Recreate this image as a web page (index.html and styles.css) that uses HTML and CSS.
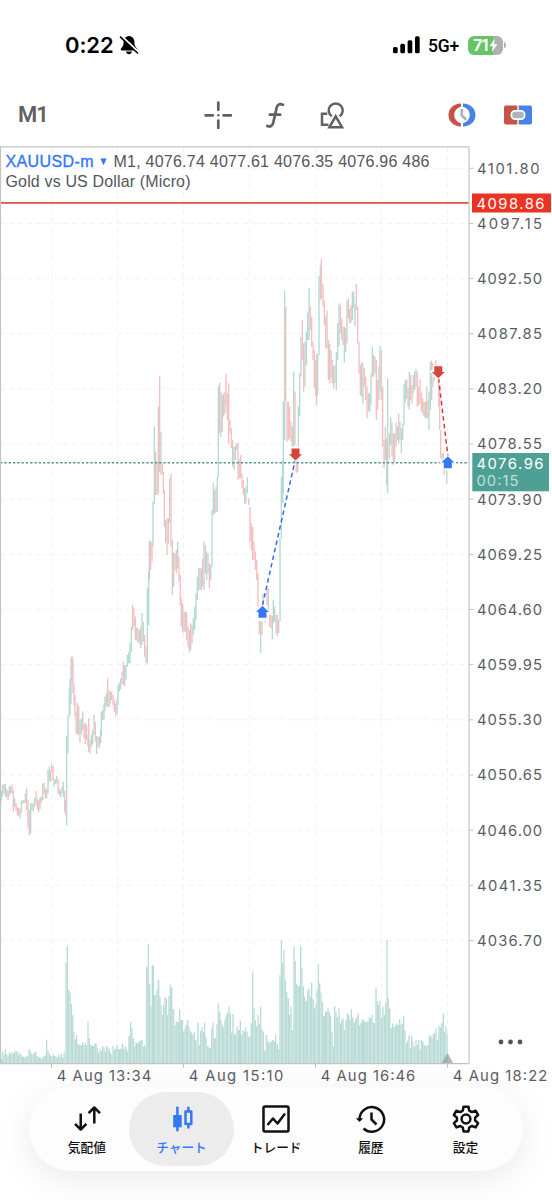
FILE: index.html
```html
<!DOCTYPE html>
<html lang="ja">
<head>
<meta charset="utf-8">
<title>XAUUSD-m</title>
<link rel="stylesheet" href="styles.css">
</head>
<body>
<div class="screen">
  <header class="status">
    <div class="status-left">
      <span class="clock">0:22</span>
      <svg class="bell" width="20" height="20" viewBox="0 0 20 20">
        <path d="M10 1C6.300 1.300 4.600 4 4.600 7.200C4.600 10.500 3.500 12 2.200 13.300C1.300 14.300 1.600 15.400 3 15.400H17C18.400 15.400 18.700 14.300 17.800 13.300C16.500 12 15.400 10.500 15.400 7.200C15.400 4 13.700 1.300 10 1Z"/>
        <path d="M7 16.600H13C12.700 20 7.300 20 7 16.600Z"/>
        <path d="M1.800 0.800L20.300 18" stroke="#fff" stroke-width="2.600"/>
        <path d="M1 1.600L19 18.500" stroke="#000" stroke-width="1.500"/>
      </svg>
    </div>
    <div class="status-right">
      <svg width="28" height="18" viewBox="0 0 28 18">
        <rect x="0" y="11" width="4.700" height="6.300" rx="1.600"/><rect x="7.300" y="7.800" width="4.700" height="9.500" rx="1.600"/>
        <rect x="14.600" y="4.300" width="4.700" height="13" rx="1.600"/><rect x="22" y="0.300" width="4.700" height="17" rx="1.600"/>
      </svg>
      <span class="network">5G+</span>
      <div class="battery"><span>71</span><svg width="9" height="13" viewBox="0 0 9 13"><path d="M5.600 0L0.500 7.300H3.700L2.700 13L8.500 5.200H5.100Z" fill="#fff"/></svg></div>
      <i class="battery-cap"></i>
    </div>
  </header>

  <nav class="toolbar">
    <span class="timeframe">M1</span>
    <div class="tools">
      <svg width="28" height="28" viewBox="0 0 28 28" class="line"><path d="M14.300 1.500V8.800M14.300 19.500V27M1.500 14.300H8.800M19.500 14.300H27"/><circle cx="14.300" cy="14.300" r="1.200" fill="#606060" stroke="none"/></svg>
      <svg width="22" height="28" viewBox="0 0 22 28" class="line"><path d="M19 3.700C15.700 2.600 13.500 3.100 12.700 6.500L9.300 21.500C8.500 25 6.300 26.200 3.300 25M5.800 13.700H16.200"/></svg>
      <svg width="28" height="28" viewBox="0 0 28 28" class="line shapes"><path d="M9.300 12.800H4V23.700H10.500M13.800 15.200A7 7 0 1 1 21.600 15.200M17.700 15.300L24 26.200H11.400Z"/></svg>
    </div>
    <div class="trade-tools">
      <svg width="28" height="24" viewBox="0 0 28 24">
        <path d="M13 0.500C5.500 0.700 0.500 5.500 0.500 12S5.500 23.300 13 23.500V20.200C9 19 6.300 16.200 6.300 12S9 5 13 3.800Z" fill="#c65446"/>
        <path d="M15 0.500C22.500 0.700 27.500 5.500 27.500 12S22.500 23.300 15 23.500V20.200C19 19 21.700 16.200 21.700 12S19 5 15 3.800Z" fill="#4982e6"/>
        <path d="M13.800 6V12.500L18.200 16.800" fill="none" stroke="#adb1b4" stroke-width="2.600"/>
      </svg>
      <svg width="28" height="20" viewBox="0 0 28 20">
        <path d="M2 0.500H13.300V19.500H2Q0 19.500 0 17.500V2.500Q0 0.500 2 0.500Z" fill="#c65446"/>
        <path d="M14.700 0.500H26Q28 0.500 28 2.500V17.500Q28 19.500 26 19.500H14.700Z" fill="#4982e6"/>
        <rect x="7.400" y="5.900" width="13.200" height="8.200" rx="3.500" fill="#adb5b8" stroke="#fff" stroke-width="1.700"/>
      </svg>
    </div>
  </nav>

  <main class="chart-wrap">
    <svg class="chart" id="chart" width="552" height="941" viewBox="0 146 552 941">
      <g id="grid" class="grid"></g>
      <g id="volume" class="volume"></g>
      <g id="candles"></g>
      <path d="M0 462.700H469" class="bid"/>
      <path d="M0 202.900H469" class="ask"/>
      <path d="M262.500 605L295 461" class="trade blue"/>
      <path d="M438.500 378L448 457" class="trade red"/>
      <g id="markers"></g>
      <path d="M441.500 1063.500L447.500 1053L453.500 1063.500Z" fill="#8a9693" opacity=".65"/>
      <path d="M0 146.900H469V1063.600H0M0.500 147V1063" class="frame"/>
      <g id="axis" class="axis"></g>
      <rect x="472" y="193.500" width="79" height="19" fill="#eb3323"/>
      <text x="476.500" y="208.500" textLength="68" class="tag">4098.86</text>
      <rect x="472.300" y="453" width="76.700" height="38.300" fill="#4e9f94"/>
      <text x="476.500" y="468.500" textLength="67" class="tag">4076.96</text>
      <text x="476.500" y="486" textLength="42" class="tag dim">00:15</text>
      <g class="caption">
        <text x="5.500" y="166.600" textLength="88" class="symbol">XAUUSD-m</text>
        <path d="M100.300 158.600H106.700L103.500 165.300Z" fill="#3478f6"/>
        <text x="113.500" y="166.600" textLength="316">M1, 4076.74 4077.61 4076.35 4076.96 486</text>
        <text x="5.500" y="186.600" textLength="185">Gold vs US Dollar (Micro)</text>
      </g>
      <g fill="#505359"><circle cx="501" cy="1042" r="2.400"/><circle cx="510.500" cy="1042" r="2.400"/><circle cx="520" cy="1042" r="2.400"/></g>
    </svg>
  </main>

  <footer class="tabs">
    <div class="tab"><svg width="32" height="30" viewBox="0 0 32 30"><path d="M9.700 8.500V24.500M4 18.800L9.700 24.500L15.400 18.800M23.300 18.500V2.500M17.600 8.200L23.300 2.500L29 8.200"/></svg><span>気配値</span></div>
    <div class="tab active"><svg width="32" height="30" viewBox="0 0 32 30"><path d="M11.400 1.700V26.300" /><rect x="7.200" y="10" width="8.500" height="12.300" fill="currentColor" stroke="none"/><path d="M22.400 1.700V6.500M22.400 19V23.500"/><rect x="19.500" y="6.500" width="5.800" height="12.500"/></svg><span>チャート</span></div>
    <div class="tab"><svg width="32" height="30" viewBox="0 0 32 30"><rect x="3.500" y="1.500" width="25" height="25" rx="1.500"/><path d="M7.500 20L13 13.500L17.500 18.500L25 8.500"/></svg><span>トレード</span></div>
    <div class="tab"><svg width="32" height="30" viewBox="0 0 32 30"><path d="M4.500 14.500A12.300 12.300 0 1 1 8.500 23.500M16.500 7.500V14.500L21.500 19.500"/><path d="M0.800 13.300H8.200L4.500 17Z" fill="currentColor" stroke="none"/></svg><span>履歴</span></div>
    <div class="tab"><svg width="32" height="30" viewBox="0 0 32 30"><path stroke-linejoin="round" d="M13.500 1.700H18.500L19.200 5.600L21.800 7.100L25.600 5.700L28.100 10L25.100 12.600V15.500L28.100 18.100L25.600 22.400L21.800 21L19.200 22.500L18.500 26.400H13.500L12.800 22.500L10.200 21L6.400 22.400L3.900 18.100L6.900 15.500V12.600L3.900 10L6.400 5.700L10.200 7.100L12.800 5.600Z"/><circle cx="16" cy="14" r="4.400"/></svg><span>設定</span></div>
  </footer>
</div>
<script src="chart.js"></script>
</body>
</html>
```
FILE: styles.css
```css
* { box-sizing: border-box; }
body { margin: 0; background: #fff; font-family: Inter, "Noto Sans CJK JP", sans-serif; }
.screen { width: 552px; height: 1200px; overflow: hidden; display: flex; flex-direction: column; background: #fff; }
.status { height: 90px; display: flex; justify-content: space-between; padding: 32px 47px 0 65px; }
.status-left, .status-right { display: flex; align-items: center; height: 26px; }
.clock { font: 600 22px/26px Inter, sans-serif; width: 49px; letter-spacing: -0.1px; }
.bell { margin-left: 5px; }
.network { font: 500 17.500px/20px Roboto, sans-serif; width: 33px; margin: 1px 7px 0 7px; letter-spacing: -0.2px; white-space: nowrap; }
.battery { width: 35px; height: 19px; border-radius: 6px; display: flex; align-items: center; justify-content: center; gap: 1px; background: linear-gradient(90deg, #65c466 71%, #afb1af 71%); }
.battery span { color: #fff; font: 700 15.500px/19px Inter, sans-serif; letter-spacing: -0.5px; }
.battery-cap { width: 2px; height: 6px; margin-left: 1px; border-radius: 0 2px 2px 0; background: #b5b5b5; }
.status-right { margin-right: -1px; }

.toolbar { height: 56px; padding: 0 20px 6px 18px; display: flex; align-items: center; justify-content: space-between; }
.timeframe { width: 186px; font: 600 22px/26px Roboto, sans-serif; letter-spacing: -1px; color: #606163; }
.tools { display: flex; align-items: center; width: 142px; justify-content: space-between; }
.trade-tools { display: flex; align-items: center; justify-content: flex-end; gap: 28px; width: 186px; }
.line { fill: none; stroke: #606060; stroke-width: 2.700; stroke-linecap: round; }
.shapes { stroke-linecap: butt; stroke-width: 2.500; }

.chart { display: block; }
.chart-wrap { height: 941px; flex: none; }
.grid path { stroke: #f3f3f4; stroke-width: 1; stroke-dasharray: 5 4; fill: none; }
.volume rect:nth-child(odd) { fill: #b6ddd5; }
.volume rect:nth-child(even) { fill: #c0dcd7; }
.g { fill: #b1dcd5; }
.r { fill: #f6bfc0; }
.m { fill: #d7cbc8; }
.bid { stroke: #559a92; stroke-width: 1.400; stroke-dasharray: 2.400 1.900; }
.ask { stroke: #d65349; stroke-width: 1.900; }
.trade { stroke-width: 1.500; stroke-dasharray: 4.500 3.200; }
.blue { stroke: #3567f0; }
.red { stroke: #d23f32; }
.frame { fill: none; stroke: #c3c3c5; stroke-width: 1.200; }
.axis path { stroke: #c3c3c5; stroke-width: 1; }
.axis text, .tag { font: 400 14.800px Inter, sans-serif; fill: #5b5d63; }
.tag { fill: #fff; }
.dim { fill: #bde0da; }
.caption text { font: 400 16px "Liberation Sans", sans-serif; fill: #55565b; }
.caption .symbol { fill: #3478f6; stroke: #3478f6; stroke-width: .35; }

.tabs { width: 494px; height: 84px; margin: 0 29px; padding: 5px; flex: none; display: flex; border-radius: 42px; background: #fdfdfd; box-shadow: 0 8px 34px rgba(0,0,0,.085); }
.tab { flex: none; width: 94.700px; height: 74px; padding-top: 13px; display: flex; flex-direction: column; align-items: center; color: #111; }
.tab:first-child { margin-left: 5.500px; }
.tab svg { fill: none; stroke: currentColor; stroke-width: 2.500; stroke-linejoin: round; }
.tab span { margin-top: 2px; font: 500 12.700px/20px "Noto Sans CJK JP", sans-serif; white-space: nowrap; }
.active { color: #3478f6; width: 105px; margin: 0 -5.200px; border-radius: 37px; background: #ececec; }
```
FILE: chart.js
```javascript
const NS = 'http://www.w3.org/2000/svg';
function add(parent, name, attrs, text) {
  const el = document.createElementNS(NS, name);
  for (const k in attrs) el.setAttribute(k, attrs[k]);
  if (text) el.textContent = text;
  document.getElementById(parent).appendChild(el);
}

// Each sample: x, high, low, direction, in thirds of a pixel from the block's origin.
const blocks = [
  [0, 580, `2 632 662 g;6 615 648 g;10 612 640 r;14 612 650 g;18 628 652 r;22 632 660 m;26 618 648 g;30 620 640 g;34 613 640 r;38 630 695 r;42 655 680 g;46 668 692 r;50 680 706 r;54 684 708 r;58 686 716 m;62 664 700 g;66 660 670 g;70 660 670 r;74 640 668 g;78 625 690 r;82 660 745 r;86 690 766 r;90 670 760 g;94 668 690 g;98 672 695 m;102 655 680 g;106 633 672 r;110 655 688 r;114 660 697 m;118 652 688 r;122 650 670 g;126 610 660 g;130 608 642 r;134 625 655 r;138 628 655 m;142 570 640 g;146 560 605 g;150 572 605 r;153 551 575 r;157 558 600 r;160 595 620 g;164 598 612 g;168 588 610 m;172 597 640 r;176 625 645 m;180 632 652 g;184 620 640 m;188 605 650 g;192 632 695 r;195 660 705 r;198 466 735 g;202 407 520 g;206 325 410 g;208 297 405 g;211 233 372 g;214 228 310 r;217 236 340 r;220 312 375 r;223 345 410 r;226 395 460 r;230 368 464 m;234 378 464 m;238 420 488 m;242 415 462 g;246 394 450 m;250 430 475 r;254 428 492 r;258 435 480 m;262 465 500 m;264 414 515 r;268 480 520 m;272 465 500 g;276 450 492 g;280 404 465 g;284 425 485 r;288 468 522 g;292 470 500 r;296 470 505 m;300 450 490 g;302 395 468 g;306 390 420 g;310 370 418 m;313 350 392 g;317 340 380 g;321 295 380 r;325 330 382 m;329 335 370 m;333 335 360 r;337 345 375 r;341 360 395 r;345 370 410 r;349 355 402 g;352 315 375 g;356 308 335 g;360 295 328 m;364 275 312 g;368 245 315 r;372 255 318 m;376 255 300 g;380 225 260 g;384 215 250 g;388 188 250 g;392 140 218 g;396 74 150 r;400 85 140 r;404 110 180 m;408 142 182 r;412 145 188 m;416 150 190 m;420 140 205 m;424 98 195 g;428 125 185 m;432 165 230 r;436 200 250 r;440 25 250 g;444 -30 135 g`],
  [130, 360, `56 542 660 m;60 545 630 r;64 545 605 r;67 425 560 g;71 200 432 g;75 275 405 r;79 305 405 r;83 140 400 m;87 48 335 r;91 215 345 m;95 310 342 r;98 335 400 r;101 390 500 r;105 480 548 m;109 475 585 r;113 475 550 m;117 355 490 m;121 342 560 r;125 540 705 m;129 578 680 m;133 580 630 m;137 570 640 r;141 545 625 g;145 590 665 r;149 645 735 r;152 715 800 r;156 730 818 m;160 755 815 r;164 755 815 m;168 758 840 r;172 800 862 r;176 810 878 m;180 790 870 m;184 795 850 r;188 775 825 g;192 740 810 g;196 700 780 g;200 650 720 g;204 625 690 g;208 625 690 m;212 625 690 m;216 595 680 m;220 545 690 m;224 555 640 m;228 575 660 g;232 580 640 m;236 610 685 r;240 615 660 g;244 450 620 g;248 370 465 g;252 390 460 m;256 380 458 r;260 350 455 g;263 80 352 g;267 68 220 m;271 95 230 m;275 105 215 m;279 100 170 m;283 95 160 m;286 42 140 r;290 100 180 r;294 70 252 r;298 180 220 r;302 205 265 r;306 240 320 m;310 260 330 g;314 258 300 m;318 250 270 r;322 248 360 m;326 298 355 r;330 285 355 r;334 340 385 r;338 360 405 r;342 385 432 m;346 380 430 g;350 352 400 g;354 415 435 r;358 440 545 r;362 490 570 r;366 500 600 r;370 545 600 r;374 575 630 r;378 600 660 r;382 640 740 r;386 783 822 r;390 783 878 g;394 785 825 r;397 700 735 g;404 783 788 g;409 685 735 m;413 685 750 m;417 765 800 r;421 765 805 r;425 768 838 g;428 720 790 g;432 740 785 m;436 765 820 r;440 765 828 m;444 780 820 m;448 535 785 g;452 350 535 g;456 300 430 g`],
  [250, 240, `98 485 760 g;102 152 600 g;105 200 485 r;109 485 605 r;113 485 600 r;117 500 595 r;121 545 605 r;125 560 620 m;129 395 620 g;133 455 615 r;137 665 700 r;141 660 695 m;143 500 620 g;147 400 528 g;151 290 410 g;155 240 360 r;159 310 455 r;163 305 440 m;167 275 375 g;171 215 300 g;175 145 300 g;179 200 270 r;183 230 320 r;187 305 360 r;191 330 445 r;195 360 470 r;198 345 495 r;201 340 465 g;205 108 345 g;209 75 180 m;212 57 175 r;217 130 200 r;221 182 255 r;225 230 325 r;229 212 325 m;233 300 420 r;237 312 430 m;241 330 415 m;245 360 430 r;249 378 445 r;253 375 430 g;257 337 450 g;261 250 360 g;265 190 320 g;269 195 280 r;273 235 300 r;277 260 315 r;281 260 368 g;285 265 335 m;289 182 310 m;293 175 235 m;297 205 250 m;301 195 248 r;305 155 240 g;309 155 205 g;313 190 260 g;317 132 210 r;321 200 310 r;325 305 400 r;329 375 465 r;333 365 470 m;337 370 492 g;341 385 440 r;345 410 480 r;349 440 535 r;353 460 515 r;357 460 515 g;361 400 495 g;365 320 410 g;369 345 410 r;373 350 400 r;377 360 540 r;381 420 510 r;385 380 480 g;388 318 455 g;392 330 480 r;396 440 620 r;400 600 685 r;404 560 660 m;408 595 735 m;411 415 760 g;416 580 655 m;420 532 615 g;424 548 650 m;428 580 675 r;432 580 665 m;436 548 620 m;440 560 600 g;444 520 610 m;448 545 600 r;452 565 640 g;456 550 600 g;460 432 555 g;464 420 490 g;468 418 475 r;472 445 500 r;476 395 510 g;480 405 480 r;484 435 490 m;488 405 460 m;492 395 450 m;496 388 440 g;500 395 500 r;504 440 495 r;508 418 490 r;512 455 515 r;516 475 520 r;520 485 530 m;524 485 535 m;528 440 535 r;532 480 537 r;535 455 570 g;539 365 510 g;543 362 390 m;543 400 480 m;547 370 385 r;547 412 440 m;551 410 420 r;555 360 375 r;564 415 500 r;567 440 570 r;570 570 655 r;574 640 662 r;578 638 655 r;580 685 705 r;588 692 731 g`]
];
for (const [ox, oy, data] of blocks) {
  for (const row of data.split(';')) {
    const [x, hi, lo, dir] = row.split(' ');
    add('candles', 'rect', { x: ox + x / 3, y: oy + hi / 3, width: 1.35, height: (lo - hi) / 3, class: dir });
  }
}

// Volume: x and top of each step, in thirds of a pixel.
const volume = [
  [0, 240, `2 387,6 365,10 375,14 357,18 372,22 378,26 368,30 372,34 367,38 372,42 366,46 362,50 365,54 375,58 368,62 375,66 380,74 382,80 378,85 357,89 362,93 370,97 375,101 368,105 365,109 378,115 382,122 385,128 380,134 376,138 329,142 362,146 370,150 378,154 380,158 373,162 378,166 380,170 382,174 374,178 380,182 370,186 384,190 370,194 360,196 98,200 47,204 180,208 188,212 222,216 255,220 305,224 328,228 315,232 342,237 346,242 345,246 337,250 345,254 337,258 346,262 274,266 325,270 345,276 348,283 340,290 352,294 368,298 358,302 362,306 348,310 352,314 365,318 348,322 352,326 360,330 368,334 375,337 348,341 360,345 355,349 345,353 358,360 356,365 340,369 358,373 348,377 355,381 365,385 318,390 276,394 295,398 325,402 350,406 338,411 340,415 335,420 332,424 330,428 350,432 345,436 358,438 110,443 43,447 163,451 230,455 106,462 195,466 195,469 180,473 150,478 200,482 225,485 255,489 225,493 200,497 205,501 255,505 198,509 163,513 172,517 237,523 285,527 275,533 275,537 237,541 270,549 305,553 295,557 285,561 270,565 290,569 303,573 308,577 315,581 305,585 330,590 345,592 278,596 345,600 302,604 292,608 305,612 278,616 320,620 348,626 355,630 355,633 295,637 278,641 323,645 325,649 282,653 220,657 245,661 270,665 285,669 292,673 268,677 255,681 248,685 230,689 250,693 308,697 252,701 310,705 315,709 290,713 300`],
  [230, 447.7, `27 300,29 272,33 315,37 300,41 305,45 292,49 305,53 320,58 320,62 280,66 125,70 235,74 270,78 288,82 255,86 280,90 230,94 298,98 305,102 362,107 315,112 335,118 340,122 335,126 330,131 335,135 315,139 342,144 358,148 135,152 30,156 98,160 60,164 148,168 185,172 205,177 255,181 230,185 300,190 52,194 93,198 162,202 168,210 47,214 115,218 170,222 200,226 213,231 182,235 175,239 200,243 158,247 208,252 235,256 225,259 178,263 102,267 160,271 188,275 215,279 258,285 245,292 235,296 245,300 258,304 305,308 350,312 228,316 245,320 262,325 235,329 280,333 270,337 265,341 300,346 270,350 250,354 255,358 268,362 237,366 262,370 278,375 268,379 260,383 250,387 287,391 278,396 268,402 275,410 275,416 262,420 265,424 255,428 278,432 280,436 172,440 213,444 225,448 212,452 262,457 230,461 255,465 218,469 30,473 205,477 235,481 295,486 280,490 292,494 288,498 280,502 285,507 267,511 283,515 280,519 258,523 302,527 340,531 332,535 316,539 355,543 318,547 335,551 350,556 330,560 345,564 330,568 358,572 330,576 333,580 345,586 348,592 345,596 320,600 315,604 325,608 312,612 310,616 295,620 330,625 288,629 292,633 280,638 250,642 305,646 288,650 312`]
];
for (const [ox, end, data] of volume) {
  const steps = data.split(',').map(s => s.split(' ').map(Number));
  steps.forEach(([x, top], i) => {
    const left = ox + x / 3;
    const right = i + 1 < steps.length ? ox + steps[i + 1][0] / 3 : end;
    add('volume', 'rect', { x: left, y: 930 + top / 3, width: right - left, height: 133.5 - top / 3 });
  });
}

for (let i = 0; i < 7; i++) add('grid', 'path', { d: `M${51.5 + i * 66} 147V1063` });
for (let i = 0; i < 15; i++) {
  const y = 168.300 + i * 55.150;
  add('grid', 'path', { d: `M0 ${y}H469` });
  add('axis', 'path', { d: `M469 ${y}H473.500` });
  const price = (4101.8 - i * 4.65).toFixed(2);
  add('axis', 'text', { x: 477, y: y + 5.400, textLength: i === 0 ? 62.5 : 65 }, price);
}
['13:34', '15:10', '16:46', '18:22'].forEach((t, i) => {
  const x = 51.5 + i * 132;
  add('axis', 'path', { d: `M${x} 1064V1068` });
  add('axis', 'text', { x: x + 5.3, y: 1081, textLength: 94.5 }, '4 Aug ' + t);
});

// Arrow markers point at the executed price.
for (const [x, y, up] of [[262.500, 612, 1], [295.500, 454.300, 0], [438.300, 372, 0], [447.800, 462.500, 1]]) {
  add('markers', 'path', {
    d: 'M0 -6.200L6.500 0H4V5.800H-4V0H-6.500Z',
    transform: `translate(${x} ${y})` + (up ? '' : ' rotate(180)'),
    fill: up ? '#3478f6' : '#d54637', stroke: '#fff', 'stroke-width': 2, 'paint-order': 'stroke'
  });
}
```
